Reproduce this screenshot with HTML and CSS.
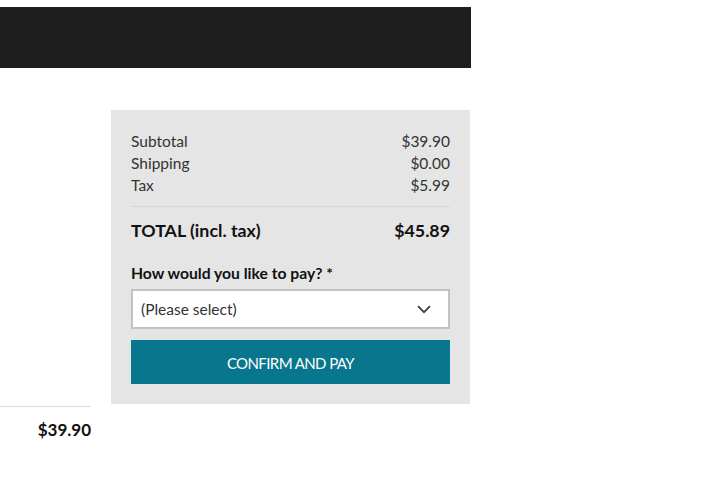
FILE: index.html
```html
<!DOCTYPE html>
<html>
<head>
<meta charset="utf-8">
<link rel="stylesheet" href="styles.css">
</head>
<body>
<div class="page">
  <header class="topbar"></header>
  <main class="checkout">
    <section class="items">
      <div class="items-total">$39.90</div>
    </section>
    <aside class="summary">
      <div class="row"><span>Subtotal</span><span>$39.90</span></div>
      <div class="row"><span>Shipping</span><span>$0.00</span></div>
      <div class="row"><span>Tax</span><span>$5.99</span></div>
      <div class="row total"><span>TOTAL (incl. tax)</span><span>$45.89</span></div>
      <label class="pay-label">How would you like to pay? *</label>
      <div class="select">
        <span>(Please select)</span>
        <svg class="chev" width="14" height="9" viewBox="0 0 14 9"><path d="M1 1.2 L7 7.2 L13 1.2" fill="none" stroke="#4b3b4b" stroke-width="1.8"/></svg>
      </div>
      <button class="pay">CONFIRM AND PAY</button>
    </aside>
  </main>
</div>
</body>
</html>
```
FILE: styles.css
```css
html, body { margin: 0; padding: 0; background: #fff; }
body { font-family: "Lato", "Open Sans", sans-serif; color: #333; }
.page { padding-top: 7px; width: 471px; }
.topbar { height: 61px; background: #1e1e1e; }
.checkout { display: flex; align-items: flex-start; gap: 20px; margin-top: 42px; width: 470px; }
.items { width: 91px; padding-top: 296px; }
.items-total { border-top: 1px solid #dcdcdc; padding-top: 12px; text-align: right; font-weight: 700; font-size: 17px; line-height: 22px; color: #111; }
.summary { width: 359px; box-sizing: border-box; background: #e5e5e5; padding: 20px; }
.row { display: flex; justify-content: space-between; font-size: 15.5px; line-height: 22px; color: #333; }
.row.total { border-top: 1px solid #d6d6d6; margin-top: 10px; padding-top: 12px; font-weight: 700; font-size: 17.8px; color: #111; }
.pay-label { display: block; margin-top: 21px; font-weight: 700; font-size: 15.7px; line-height: 22px; color: #111; }
.select { margin-top: 5px; height: 40px; box-sizing: border-box; border: 2px solid #c2c2c2; background: #fff; display: flex; align-items: center; justify-content: space-between; padding: 0 17px 0 8px; font-size: 15.5px; color: #333; }
.chev { display: block; }
.pay { display: block; width: 100%; margin-top: 11px; height: 44px; border: 0; background: #08768c; color: #fff; font-family: inherit; font-size: 15px; letter-spacing: -0.6px; padding: 2px 0 0; }
```
